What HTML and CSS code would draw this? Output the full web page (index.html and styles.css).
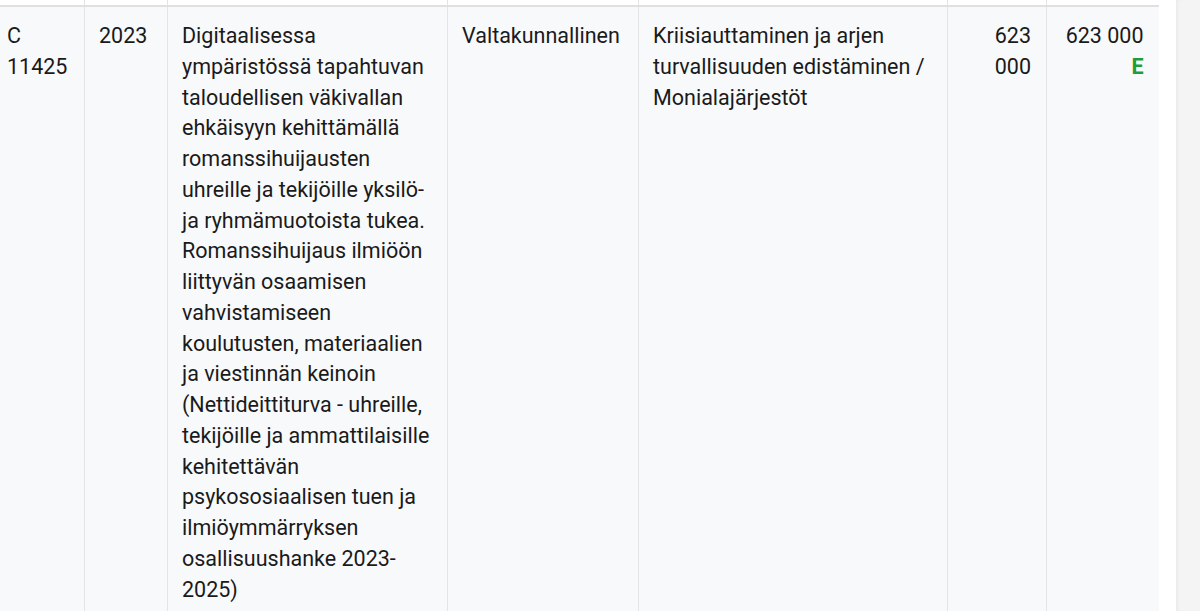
FILE: index.html
```html
<!DOCTYPE html>
<html lang="fi">
<head>
<meta charset="utf-8">
<link rel="stylesheet" href="styles.css">
</head>
<body>
<div class="page">
  <div class="scroller">
    <table class="grid">
      <colgroup>
        <col class="c1"><col class="c2"><col class="c3"><col class="c4"><col class="c5"><col class="c6"><col class="c7">
      </colgroup>
      <tbody>
        <tr class="prev">
          <td></td><td></td><td></td><td></td><td></td><td></td><td></td>
        </tr>
        <tr class="row">
          <td>C 11425</td>
          <td>2023</td>
          <td>Digitaalisessa ympäristössä tapahtuvan taloudellisen väkivallan ehkäisyyn kehittämällä romanssihuijausten uhreille ja tekijöille yksilö- ja ryhmämuotoista tukea. Romanssihuijaus ilmiöön liittyvän osaamisen vahvistamiseen koulutusten, materiaalien ja viestinnän keinoin (Nettideittiturva - uhreille, tekijöille ja ammattilaisille kehitettävän psykososiaalisen tuen ja ilmiöymmärryksen osallisuushanke 2023-2025)</td>
          <td>Valtakunnallinen</td>
          <td>Kriisiauttaminen ja arjen turvallisuuden edistäminen / Monialajärjestöt</td>
          <td class="num">623 000</td>
          <td class="num">623 000<span class="tag">E</span></td>
        </tr>
      </tbody>
    </table>
  </div>
  <div class="side"></div>
</div>
</body>
</html>
```

FILE: styles.css
```css
html, body {
  margin: 0;
  padding: 0;
  background: #ffffff;
}
body {
  font-family: Roboto, "Liberation Sans", sans-serif;
  color: #1a1a1a;
  overflow: hidden;
}
.page {
  display: flex;
  width: 1200px;
  height: 611px;
  overflow: hidden;
}
.scroller {
  width: 1159px;
  flex: none;
  overflow: hidden;
}
.grid {
  margin-left: -8px;
  border-collapse: collapse;
  table-layout: fixed;
  width: 1167px;
  font-size: 21.5px;
  line-height: 30.75px;
}
.c1 { width: 92px; }
.c2 { width: 83px; }
.c3 { width: 280px; }
.c4 { width: 191px; }
.c5 { width: 309px; }
.c6 { width: 99px; }
.c7 { width: 113px; }
.grid td {
  border-left: 1px solid #e3e4e6;
  border-right: 1px solid #e3e4e6;
  vertical-align: top;
  padding: 0 14px;
}
.prev td {
  height: 5px;
  padding: 0;
  background: #ffffff;
  border-bottom: 2px solid #dfe0e2;
}
.row td {
  background: #f8f9fb;
  padding-top: 14px;
  padding-bottom: 16px;
}
.row td.num {
  text-align: right;
  padding-right: 15px;
}
.grid td:last-child {
  border-right: 2px solid #dcdde0;
}
.tag {
  display: block;
  color: #1e9e3a;
  font-weight: 700;
}
.side {
  flex: none;
  width: 24px;
  margin-left: 17px;
  background: #f4f4f5;
  box-shadow: inset 3px 0 4px -2px rgba(0,0,0,0.06);
}
```
